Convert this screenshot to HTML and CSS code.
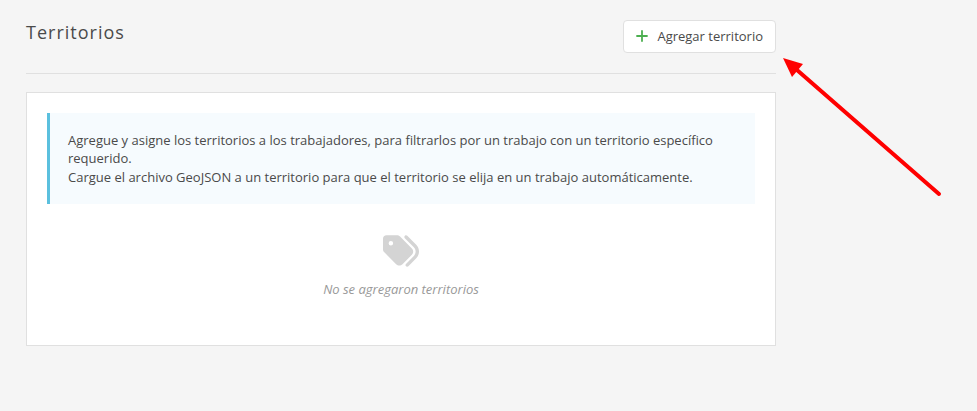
FILE: index.html
```html
<!DOCTYPE html>
<html lang="es">
<head>
    <meta charset="UTF-8">
    <meta name="viewport" content="width=device-width, initial-scale=1.0">
    <title>Territorios</title>
    <link rel="stylesheet" href="styles.css">
</head>
<body>
    <main class="page">
        <header class="page-header">
            <h1 class="page-title">Territorios</h1>
            <button type="button" class="btn-add">
                <svg class="icon-plus" viewBox="0 0 12 12" aria-hidden="true">
                    <path d="M6 1v10M1 6h10" />
                </svg>
                Agregar territorio
            </button>
        </header>

        <section class="panel">
            <div class="info">
                <p>Agregue y asigne los territorios a los trabajadores, para filtrarlos por un trabajo con un territorio específico requerido.</p>
                <p>Cargue el archivo GeoJSON a un territorio para que el territorio se elija en un trabajo automáticamente.</p>
            </div>
            <div class="empty">
                <svg class="icon-tags" viewBox="0 0 512 512" aria-hidden="true">
                    <path d="M345 39.1L472.8 168.4c52.4 53 52.4 138.2 0 191.2L360.8 472.9c-9.3 9.4-24.5 9.5-33.9 .2s-9.5-24.5-.2-33.9L438.6 325.9c33.9-34.3 33.9-89.4 0-123.7L310.9 72.9c-9.3-9.4-9.2-24.6 .2-33.9s24.6-9.2 33.9 .2zM0 229.5V80C0 53.5 21.5 32 48 32H197.5c17 0 33.3 6.7 45.3 18.7l168 168c25 25 25 65.5 0 90.5L277.3 442.7c-25 25-65.5 25-90.5 0l-168-168C6.7 262.7 0 246.5 0 229.5zM144 144a32 32 0 1 0 -64 0 32 32 0 1 0 64 0z" />
                </svg>
                <p class="empty-text">No se agregaron territorios</p>
            </div>
        </section>

        <!-- Arrow pointing at the add button -->
        <svg class="arrow" viewBox="0 0 160 140" aria-hidden="true">
            <path class="arrow-line" d="M14 12L156 136" />
            <path class="arrow-head" d="M0 0L20 6L9 19z" />
        </svg>
    </main>
</body>
</html>
```

FILE: styles.css
```css
* {
    box-sizing: border-box;
}
body {
    margin: 0;
    padding: 20px 26px;
    background-color: #f5f5f5;
    color: #4a4a4a;
    font-family: "Open Sans", sans-serif;
    font-size: 13px;
    line-height: 18px;
}
h1, p {
    margin: 0;
}
.page {
    position: relative;
    max-width: 750px;
}
.page-header {
    display: flex;
    justify-content: space-between;
    align-items: flex-start;
    padding-bottom: 20px;
    margin-bottom: 18px;
    border-bottom: 1px solid #e0e0e0;
}
.page-title {
    font-size: 18px;
    font-weight: 400;
    line-height: 25px;
    letter-spacing: 1px; /* wide-set heading */
}
.btn-add {
    display: flex;
    align-items: center;
    gap: 9px;
    padding: 6px 12px 7px;
    border: 1px solid #e0e0e0;
    border-radius: 4px;
    background-color: #fff;
    color: inherit;
    font: inherit;
    cursor: pointer;
}
.icon-plus {
    width: 12px;
    height: 12px;
    fill: none;
    stroke: #4caf50;
    stroke-width: 1.8;
    stroke-linecap: round;
}
.panel {
    padding: 20px;
    border: 1px solid #e0e0e0;
    background-color: #fff;
}
.info {
    display: flex;
    flex-direction: column;
    gap: 1px;
    padding: 18px;
    border-left: 3px solid #5bc0de;
    background-color: #f6fbfe;
}
.empty {
    display: flex;
    flex-direction: column;
    align-items: center;
    gap: 11px;
    padding: 29px 0 27px;
}
.icon-tags {
    width: 36px;
    height: 36px;
    fill: #d4d4d4;
}
.empty-text {
    color: #999;
    font-style: italic;
}
/* Sits over the page, just past the right edge of the content */
.arrow {
    position: absolute;
    top: 38px;
    left: 100%;
    width: 160px;
    height: 140px;
    margin-left: 7px;
    pointer-events: none;
}
.arrow-line {
    fill: none;
    stroke: #f00;
    stroke-width: 4;
    stroke-linecap: round;
}
.arrow-head {
    fill: #f00;
}
```
